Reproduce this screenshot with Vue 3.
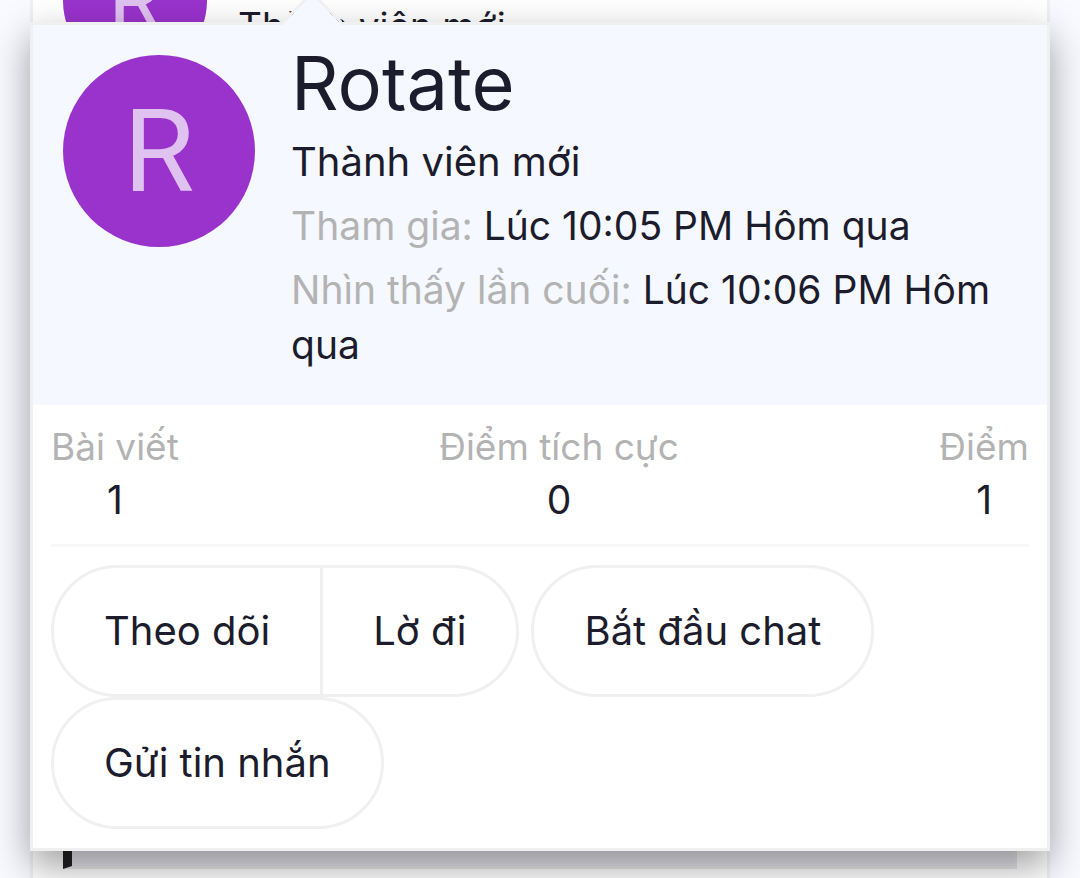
<script setup>
const member = {
  name: 'Rotate',
  initial: 'R',
  title: 'Thành viên mới',
}

const details = [
  { label: 'Tham gia:', value: 'Lúc 10:05 PM Hôm qua' },
  { label: 'Nhìn thấy lần cuối:', value: 'Lúc 10:06 PM Hôm qua' },
]

const stats = [
  { label: 'Bài viết', value: 1 },
  { label: 'Điểm tích cực', value: 0 },
  { label: 'Điểm', value: 1 },
]

const actionGroups = [['Theo dõi', 'Lờ đi'], ['Bắt đầu chat'], ['Gửi tin nhắn']]
</script>

<template>
  <div class="page">
    <article class="post">
      <header class="post-user">
        <span class="avatar avatar-small">{{ member.initial }}</span>
        <span class="post-title">{{ member.title }}</span>
      </header>
      <blockquote class="quote"></blockquote>
    </article>

    <section class="tooltip" aria-label="Rotate">
      <svg class="arrow" viewBox="0 0 60 30" aria-hidden="true">
        <path d="M0 30 L30 0 L60 30 Z" fill="#f5f8ff" />
        <path d="M0 28 L30 -2 L60 28" fill="none" stroke="#f0f0f2" stroke-width="3" />
      </svg>

      <div class="head">
        <a href="#" class="avatar avatar-large">{{ member.initial }}</a>
        <div class="info">
          <h4 class="name"><a href="#">{{ member.name }}</a></h4>
          <div class="row title">{{ member.title }}</div>
          <dl v-for="d in details" :key="d.label" class="row">
            <dt>{{ d.label }}</dt>{{ ' ' }}<dd>{{ d.value }}</dd>
          </dl>
        </div>
      </div>

      <div class="body">
        <div class="stats">
          <dl v-for="s in stats" :key="s.label" class="stat">
            <dt>{{ s.label }}</dt>
            <dd>{{ s.value }}</dd>
          </dl>
        </div>
        <hr class="rule" />
        <div class="actions">
          <div v-for="(group, i) in actionGroups" :key="i" class="group">
            <button v-for="label in group" :key="label" type="button">{{ label }}</button>
          </div>
        </div>
      </div>
    </section>
  </div>
</template>

<style>
html,
body {
  background: #f8faff;
  overflow: hidden;
}
</style>

<style scoped>
.page {
  position: relative;
  display: flex;
  height: 100vh;
  overflow: hidden;
  padding: 0 30px;
  box-sizing: border-box;
  font-family: Inter, "Noto Sans", sans-serif;
  font-size: 39px;
  color: #1c1c2c;
}

.post {
  flex: 1;
  display: flex;
  flex-direction: column;
  margin: -104px 0 -30px;
  padding: 30px;
  border: 3px solid #f0f0f0;
  background: #fff;
}

.post-user {
  display: flex;
  gap: 31px;
}

.post-title {
  padding-top: 70px;
  font-size: 37px;
  line-height: 54px;
}

.quote {
  flex: 1;
  margin: 30px 0 6px;
  border: 3px solid #e9e9e9;
  border-left: 9px solid #222;
  background: #e6e6ee;
}

.avatar {
  flex: none;
  display: flex;
  align-items: center;
  justify-content: center;
  border-radius: 50%;
  background: #9933cc;
  color: #e0c2f0;
  font-family: Roboto, sans-serif;
  text-decoration: none;
}

.avatar-small {
  width: 144px;
  height: 144px;
  font-size: 86px;
}

.avatar-large {
  width: 192px;
  height: 192px;
  font-size: 115px;
}

.tooltip {
  position: absolute;
  top: 22px;
  left: 30px;
  right: 30px;
  border: 3px solid #f0f0f0;
  background: #fff;
  box-shadow: 0 15px 36px rgba(0, 0, 0, 0.38);
}

.arrow {
  position: absolute;
  left: 249px;
  top: -30px;
  width: 60px;
  height: 30px;
}

.head {
  display: flex;
  gap: 36px;
  padding: 30px 30px 33px;
  background: #f5f8ff;
}

.info {
  flex: 1;
}

.name {
  margin: 0 0 23px;
  font-size: 74px;
  font-weight: 400;
  line-height: 56px;
}

.name a {
  color: inherit;
  text-decoration: none;
}

.row {
  margin: 9px 0 0;
  line-height: 55px;
}

.title {
  font-size: 40px;
}

.row dt,
.row dd {
  display: inline;
  margin: 0;
}

dt {
  color: #b3b3b3;
}

.body {
  padding: 15px 18px 19px;
}

.stats {
  display: flex;
  justify-content: space-between;
}

.stat {
  margin: 0;
  text-align: center;
}

.stat dt {
  font-size: 37px;
  line-height: 54px;
}

.stat dd {
  margin: 0;
  line-height: 52px;
}

.rule {
  height: 3px;
  margin: 18px 0;
  border: 0;
  background: #f8f8f8;
}

.actions {
  display: flex;
  flex-wrap: wrap;
  column-gap: 12px;
}

.group {
  display: flex;
}

button {
  padding: 36px 50px;
  border: 3px solid #f0f0f0;
  border-radius: 66px;
  background: transparent;
  color: inherit;
  font: inherit;
  font-size: 40px;
  line-height: 54px;
}

button:not(:last-child) {
  border-top-right-radius: 0;
  border-bottom-right-radius: 0;
}

button:not(:first-child) {
  border-left: 0;
  border-top-left-radius: 0;
  border-bottom-left-radius: 0;
}
</style>
